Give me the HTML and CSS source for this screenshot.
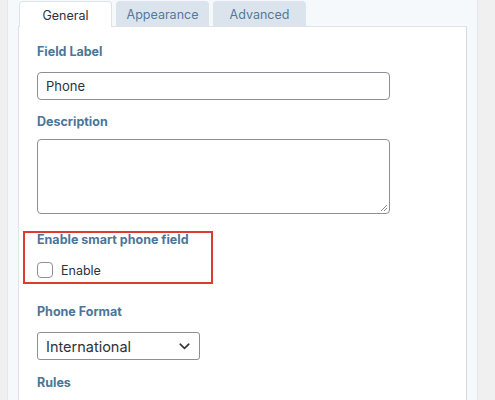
FILE: index.html
```html
<!DOCTYPE html>
<html>
<head>
<meta charset="utf-8">
<link rel="stylesheet" href="styles.css">
</head>
<body>
<div class="wrap">
  <div class="tabs">
    <div class="tab active">General</div>
    <div class="tab">Appearance</div>
    <div class="tab">Advanced</div>
  </div>
  <div class="panel">
    <div class="field">
      <div class="label">Field Label</div>
      <div class="input">Phone</div>
    </div>
    <div class="field">
      <div class="label tight">Description</div>
      <div class="textarea">
        <svg class="grip" width="8" height="8" viewBox="0 0 8 8"><path d="M7 1L1 7M7 4L4 7" stroke="#8a8a8a" stroke-width="1" fill="none"/></svg>
      </div>
    </div>
    <div class="field highlight">
      <div class="label">Enable smart phone field</div>
      <div class="check-row">
        <span class="checkbox"></span>
        <span class="check-text">Enable</span>
      </div>
    </div>
    <div class="field format">
      <div class="label">Phone Format</div>
      <div class="select">
        <span>International</span>
        <svg width="11" height="7" viewBox="0 0 11 7"><path d="M1.2 1.2L5.5 5.3L9.8 1.2" stroke="#333" stroke-width="1.6" fill="none" stroke-linecap="round" stroke-linejoin="round"/></svg>
      </div>
    </div>
    <div class="field">
      <div class="label">Rules</div>
    </div>
  </div>
</div>
</body>
</html>
```
FILE: styles.css
```css
html, body {
  margin: 0;
  padding: 0;
  height: 400px;
  overflow: hidden;
}
body {
  background: #f0f0f1;
  font-family: Inter, "Noto Sans", "Liberation Sans", sans-serif;
  color: #2c3338;
}
.wrap {
  margin-left: 7px;
  width: 471px;
  height: 400px;
  box-sizing: border-box;
  background: #f5f9fc;
  border-left: 1px solid #e4e8ec;
  border-right: 1px solid #e4e8ec;
  padding: 1px 10px 0 10px;
  overflow: hidden;
}
.tabs {
  display: flex;
  gap: 4px;
  padding-left: 1px;
  height: 25px;
  position: relative;
  z-index: 1;
}
.tab {
  width: 93px;
  height: 25px;
  box-sizing: border-box;
  background: #dbe4ec;
  border-radius: 4px 4px 0 0;
  color: #55799a;
  font-size: 12.5px;
  display: flex;
  align-items: center;
  justify-content: center;
  padding-top: 1px;
}
.tab.active {
  background: #fff;
  color: #2c3338;
  border: 1px solid #dfe3e7;
  border-bottom: none;
  height: 26px;
}
.panel {
  background: #fff;
  border: 1px solid #dfe3e7;
  border-right-color: #d6dbe0;
  height: 390px;
  box-sizing: border-box;
  padding: 17px 18px 0 18px;
}
.field {
  margin-bottom: 14px;
}
.field.format {
  margin-bottom: 15px;
}
.label {
  font-size: 12.5px;
  font-weight: 700;
  color: #4a7698;
  line-height: 16px;
  margin-bottom: 12px;
}
.label.tight {
  margin-bottom: 9px;
}
.input {
  width: 353px;
  height: 28px;
  box-sizing: border-box;
  border: 1px solid #8c8f94;
  border-radius: 4px;
  font-size: 13px;
  line-height: 26px;
  padding-left: 8px;
  color: #2c3338;
}
.textarea {
  width: 353px;
  height: 75px;
  box-sizing: border-box;
  border: 1px solid #8c8f94;
  border-radius: 4px;
  position: relative;
}
.grip {
  position: absolute;
  right: 1px;
  bottom: 1px;
}
.highlight {
  position: relative;
  margin-top: 18px;
  margin-bottom: 26px;
}
.highlight .label {
  margin-bottom: 14px;
}
.highlight::after {
  content: "";
  position: absolute;
  left: -14px;
  top: -1px;
  width: 190px;
  height: 53px;
  box-sizing: border-box;
  border: 2px solid #dd3a30;
}
.check-row {
  display: flex;
  align-items: center;
  gap: 8px;
  height: 16px;
}
.checkbox {
  width: 16px;
  height: 16px;
  box-sizing: border-box;
  border: 1px solid #8c8f94;
  border-radius: 4px;
  background: #fff;
}
.check-text {
  font-size: 12.5px;
  color: #2c3338;
}
.select {
  width: 163px;
  height: 28px;
  box-sizing: border-box;
  border: 1px solid #8c8f94;
  border-radius: 3px;
  display: flex;
  align-items: center;
  justify-content: space-between;
  padding: 0 9px 0 8px;
  font-size: 14.5px;
  color: #2c3338;
}
```
